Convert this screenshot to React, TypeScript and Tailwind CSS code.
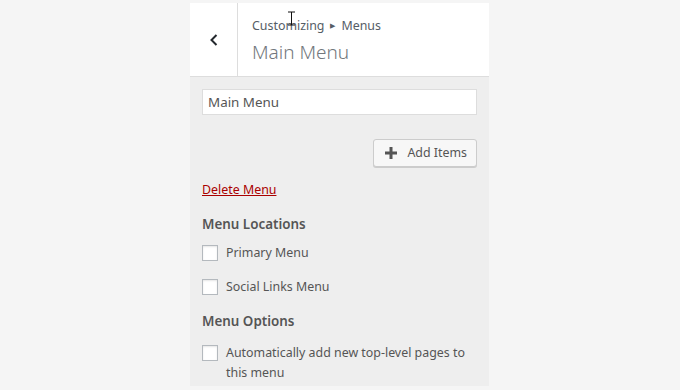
import React from "react";

const font = { fontFamily: '"Segoe UI", "Noto Sans", "Open Sans", sans-serif' };

function Checkbox({ label }: { label: React.ReactNode }) {
  return (
    <label className="flex items-start gap-2 text-[12.4px] leading-5 text-[#555]">
      <span className="mt-[2px] h-4 w-4 shrink-0 border border-[#b4b9be] bg-white shadow-[inset_0_1px_2px_rgba(0,0,0,0.1)]" />
      <span>{label}</span>
    </label>
  );
}

export default function App() {
  return (
    <div className="relative h-[390px] w-[680px] bg-[#f5f5f5] pt-[3px]" style={font}>
      <div className="ml-[190px] flex h-[383px] w-[299px] flex-col bg-[#eee]">
        {/* header */}
        <div className="flex h-[74px] border-b border-[#ddd] bg-white">
          <button className="flex w-[48px] items-center justify-center border-r border-[#ddd] text-[#23282d]">
            <svg width="12" height="14" viewBox="0 0 12 14" fill="none">
              <path d="M8.5 2 L3.5 7 L8.5 12" stroke="currentColor" strokeWidth="2" />
            </svg>
          </button>
          <div className="flex flex-col pl-[14px] pt-[13px]">
            <div className="flex items-center text-[12.4px] leading-5 text-[#555d66]">
              <span>Customizing</span>
              <span className="mx-[6px] text-[7px]">▶</span>
              <span>Menus</span>
            </div>
            <div className="mt-[1px] text-[19px] font-light leading-[30px] text-[#72777c]">Main Menu</div>
          </div>
        </div>

        {/* body */}
        <div className="flex flex-col px-[12px] pt-[12px]">
          <div className="flex h-[26px] items-center border border-[#ddd] bg-white px-[5px] text-[13.4px] text-[#555]">
            Main Menu
          </div>
          <div className="mt-[24px] flex justify-end">
            <button className="flex h-[28px] items-center gap-[9px] rounded-[3px] border border-[#ccc] bg-[#f7f7f7] pl-[10px] pr-[9px] text-[12.4px] text-[#555] shadow-[0_1px_0_#ccc]">
              <svg width="14" height="14" viewBox="0 0 14 14">
                <path d="M5.5 1h3v4.5H13v3H8.5V13h-3V8.5H1v-3h4.5z" fill="#555" />
              </svg>
              Add Items
            </button>
          </div>
          <a className="mt-[13px] text-[12.4px] leading-5 text-[#a00] underline">Delete Menu</a>

          <div className="mt-[14px] text-[13.4px] font-semibold leading-5 text-[#555]">Menu Locations</div>
          <div className="mt-[9px] flex flex-col gap-[14px]">
            <Checkbox label="Primary Menu" />
            <Checkbox label="Social Links Menu" />
          </div>
          <div className="mt-[14px] text-[13.4px] font-semibold leading-5 text-[#555]">Menu Options</div>
          <div className="mt-[12px]">
            <Checkbox label="Automatically add new top-level pages to this menu" />
          </div>
        </div>
      </div>

      {/* text cursor */}
      <svg className="absolute left-[287px] top-[11px]" width="9" height="15" viewBox="0 0 9 15">
        <path d="M1 1h7M4.5 1v13M1 14h7" stroke="#111" strokeWidth="1" />
      </svg>
    </div>
  );
}
